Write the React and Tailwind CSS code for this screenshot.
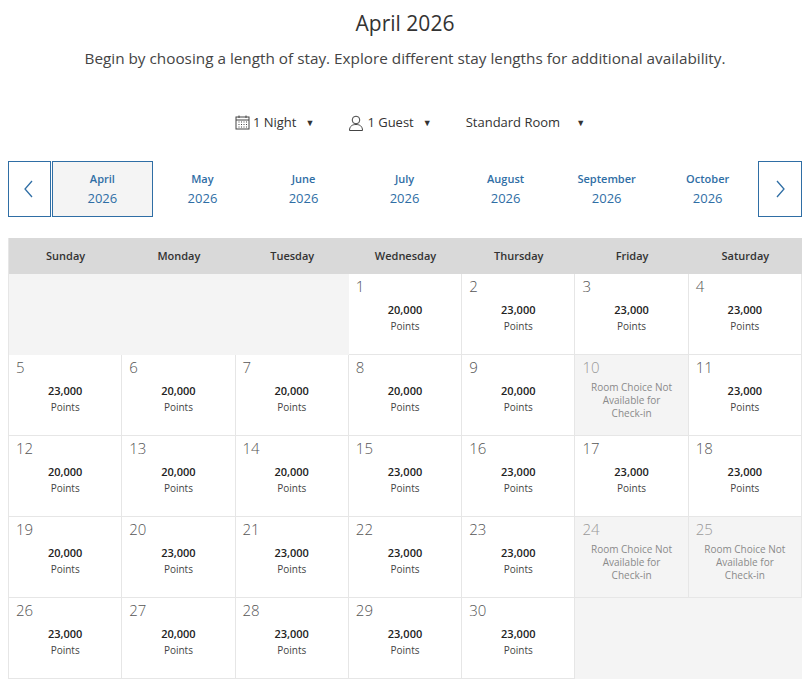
import React from 'react';

const pts = {1:'20,000',2:'23,000',3:'23,000',4:'23,000',5:'23,000',6:'20,000',7:'20,000',8:'20,000',9:'20,000',11:'23,000',12:'20,000',13:'20,000',14:'20,000',15:'23,000',16:'23,000',17:'23,000',18:'23,000',19:'20,000',20:'23,000',21:'23,000',22:'23,000',23:'23,000',26:'23,000',27:'20,000',28:'23,000',29:'23,000',30:'23,000'};
const unavailable = [10, 24, 25];
const months = ['April', 'May', 'June', 'July', 'August', 'September', 'October'];
const days = ['Sunday', 'Monday', 'Tuesday', 'Wednesday', 'Thursday', 'Friday', 'Saturday'];

function Cell({ d }) {
    if (!d) return <div className="bg-[#f4f4f4] h-[81px]" />;
    const na = unavailable.includes(d);
    return (
        <div className={`h-[81px] border-r border-b border-[#e6e6e6] px-[7px] pt-[1px] ${na ? 'bg-[#f4f4f4]' : 'bg-white'}`}>
            <div className={`text-[15px] font-light ${na ? 'text-[#999]' : 'text-[#555]'}`}>{d}</div>
            {na ? (
                <div className="text-center text-[10px] leading-[13px] text-[#8a8a8a] mt-[2px]">Room Choice Not<br />Available for<br />Check-in</div>
            ) : (
                <div className="text-center mt-[4px]">
                    <div className="text-[11px] font-semibold text-[#222] leading-[16px]">{pts[d]}</div>
                    <div className="text-[10px] text-[#444] leading-[17px]">Points</div>
                </div>
            )}
        </div>
    );
}

export default function App() {
    const cells = [null, null, null];
    for (let i = 1; i <= 30; i++) cells.push(i);
    cells.push(null, null);
    return (
        <div className="bg-white w-[810px] h-[687px] overflow-hidden text-[#333]" style={{ fontFamily: '"Open Sans", sans-serif' }}>
            <h1 className="text-center text-[21px] text-[#333] pt-[9px] leading-[28px]">April 2026</h1>
            <p className="text-center text-[15.3px] text-[#444] mt-[10px]">Begin by choosing a length of stay. Explore different stay lengths for additional availability.</p>
            <div className="flex justify-center items-center gap-[34px] mt-[43px] text-[13px] text-[#333] pl-[10px]">
                <span className="flex items-center gap-[3px]">
                    <svg width="15" height="15" viewBox="0 0 15 15" fill="none" stroke="#444" strokeWidth="1">
                        <rect x="1" y="2" width="13" height="12" />
                        <line x1="1" y1="5" x2="14" y2="5" />
                        <line x1="4" y1="0.5" x2="4" y2="3" /><line x1="11" y1="0.5" x2="11" y2="3" />
                        {[7, 9.5, 12].map(y => [3.5, 6, 8.5, 11].map(x => <rect key={x + '-' + y} x={x} y={y - 0.5} width="1" height="1" fill="#444" stroke="none" />))}
                    </svg>
                    1 Night <span className="text-[9px] ml-[6px]">▼</span>
                </span>
                <span className="flex items-center gap-[3px]">
                    <svg width="16" height="16" viewBox="0 0 16 16" fill="none" stroke="#444" strokeWidth="1">
                        <circle cx="8" cy="5" r="3.8" />
                        <path d="M1.5 15.5 C1.5 11 4.5 9.5 8 9.5 C11.5 9.5 14.5 11 14.5 15.5 Z" />
                    </svg>
                    1 Guest <span className="text-[9px] ml-[6px]">▼</span>
                </span>
                <span className="flex items-center">Standard Room <span className="text-[9px] ml-[16px]">▼</span></span>
            </div>
            <div className="flex mx-[8px] mt-[29px] h-[56px]">
                <button className="w-[44px] border border-[#2f6ea5] flex items-center justify-center text-[#2f6ea5]">
                    <svg width="12" height="18" viewBox="0 0 12 18" fill="none" stroke="#2f6ea5" strokeWidth="1.3"><path d="M9 1 L2 9 L9 17" /></svg>
                </button>
                {months.map((m, i) => (
                    <div key={m} className={`w-[104px] flex flex-col items-center justify-center text-[#2f6ea5] ${i === 0 ? 'bg-[#f4f4f4] border border-[#2f6ea5] ml-[1px] mr-[-1px]' : ''}`}>
                        <div className="text-[11px] font-semibold leading-[18px]">{m}</div>
                        <div className="text-[13px] leading-[20px]">2026</div>
                    </div>
                ))}
                <button className="w-[45px] border border-[#2f6ea5] flex items-center justify-center ml-auto">
                    <svg width="12" height="18" viewBox="0 0 12 18" fill="none" stroke="#2f6ea5" strokeWidth="1.3"><path d="M3 1 L10 9 L3 17" /></svg>
                </button>
            </div>
            <div className="mx-[8px] mt-[21px] border-l border-[#e6e6e6]">
                <div className="grid grid-cols-7 bg-[#d9d9d9] h-[36px] items-center">
                    {days.map(d => <div key={d} className="text-center text-[11px] font-semibold text-[#333]">{d}</div>)}
                </div>
                <div className="grid grid-cols-7">
                    {cells.map((d, i) => <Cell key={i} d={d} />)}
                </div>
            </div>
        </div>
    );
}
